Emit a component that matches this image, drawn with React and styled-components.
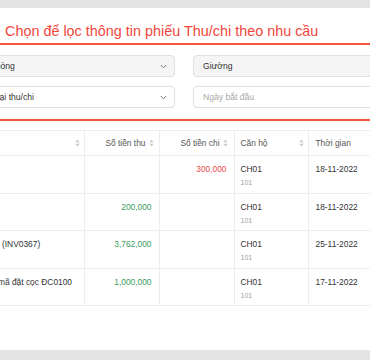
import styled, { createGlobalStyle } from "styled-components";

const GlobalStyle = createGlobalStyle`
  html, body {
    margin: 0;
    padding: 0;
    width: 370px;
    height: 360px;
    overflow: hidden;
    background: #e4e4e4;
    font-family: "Liberation Sans", Arial, sans-serif;
  }
`;

const Page = styled.div`
  padding-top: 8px;
  height: 360px;
  box-sizing: border-box;
`;

const Card = styled.div`
  background: #ffffff;
  height: 342px;
  overflow: hidden;
`;

const Title = styled.h2`
  margin: 0;
  padding: 13px 5px 2px;
  font-size: 14.4px;
  line-height: 20px;
  font-weight: 400;
  color: #f1463b;
  white-space: nowrap;
  border-bottom: 2px solid #f3553f;
`;

const Filters = styled.div`
  display: grid;
  grid-template-columns: 195px 325px;
  column-gap: 18px;
  row-gap: 9px;
  margin-left: -20px;
  margin-right: -200px;
  padding: 10px 0 11px;
  border-bottom: 2px solid #f3553f;
`;

const Field = styled.div`
  display: flex;
  align-items: center;
  justify-content: space-between;
  height: 22px;
  box-sizing: border-box;
  padding: 0 7px 0 9px;
  border: 1px solid #e0e0e0;
  border-radius: 4px;
  background: ${(p) => (p.$filled ? "#f5f5f5" : "#ffffff")};
  font-size: 8.6px;
  color: ${(p) => (p.$placeholder ? "#a8a8a8" : "#333333")};
  white-space: nowrap;
`;

const Chevron = () => (
  <svg width="7" height="5" viewBox="0 0 7 5" fill="none">
    <path d="M0.8 1 L3.5 3.8 L6.2 1" stroke="#777" strokeWidth="1" />
  </svg>
);

const TableWrap = styled.div`
  margin-top: 9px;
  overflow: hidden;
`;

const Table = styled.table`
  border-collapse: collapse;
  table-layout: fixed;
  width: 400px;
  font-size: 8.4px;
  color: #333333;
`;

const Th = styled.th`
  height: 25px;
  padding: 0 ${(p) => p.$pr ?? 6}px 0 ${(p) => p.$pl ?? 6}px;
  font-weight: 400;
  color: #555555;
  border: 1px solid #ececf3;
  border-left: ${(p) => (p.$first ? "none" : "1px solid #ececf3")};
  box-sizing: border-box;
`;

const HeadInner = styled.div`
  display: flex;
  align-items: center;
  justify-content: ${(p) => (p.$right ? "flex-end" : "space-between")};
  gap: 3px;
  white-space: nowrap;
`;

const Td = styled.td`
  height: 37.5px;
  box-sizing: border-box;
  vertical-align: top;
  padding: 6px ${(p) => p.$pr ?? 6}px 0 ${(p) => p.$pl ?? 6}px;
  text-align: ${(p) => (p.$right ? "right" : "left")};
  border: 1px solid #ececf3;
  border-left: ${(p) => (p.$first ? "none" : "1px solid #ececf3")};
  border-top: none;
  line-height: 14px;
  white-space: nowrap;
  overflow: hidden;
`;

const Amount = styled.span`
  color: ${(p) => (p.$out ? "#ec4747" : "#3a9a5b")};
`;

const Clip = styled.span`
  display: inline-block;
  margin-left: ${(p) => p.$shift || 0}px;
`;

const Sub = styled.div`
  font-size: 7px;
  line-height: 13px;
  color: #a0a0a0;
`;

const SortIcon = () => (
  <svg width="5" height="8" viewBox="0 0 5 8">
    <path d="M2.5 0.5 L4.6 3.2 H0.4 Z" fill="#c8c8c8" />
    <path d="M2.5 7.5 L4.6 4.8 H0.4 Z" fill="#c8c8c8" />
  </svg>
);

const rows = [
  { desc: "", shift: 0, inAmt: "", outAmt: "300,000", date: "18-11-2022" },
  { desc: "", shift: 0, inAmt: "200,000", outAmt: "", date: "18-11-2022" },
  { desc: "(INV0367)", shift: -4, inAmt: "3,762,000", outAmt: "", date: "25-11-2022" },
  { desc: "mã đặt cọc ĐC0100", shift: -8, inAmt: "1,000,000", outAmt: "", date: "17-11-2022" },
];

export default function App() {
  return (
    <Page>
      <GlobalStyle />
      <Card>
        <Title>Chọn để lọc thông tin phiếu Thu/chi theo nhu cầu</Title>
        <Filters>
          <Field $filled>
            <span>Phòng</span>
            <Chevron />
          </Field>
          <Field $filled>Giường</Field>
          <Field>
            <span>Loại thu/chi</span>
            <Chevron />
          </Field>
          <Field $placeholder>Ngày bắt đầu</Field>
        </Filters>
        <TableWrap>
          <Table>
            <colgroup>
              <col style={{ width: 84 }} />
              <col style={{ width: 75 }} />
              <col style={{ width: 75 }} />
              <col style={{ width: 74 }} />
              <col style={{ width: 92 }} />
            </colgroup>
            <thead>
              <tr>
                <Th $first $pr={4}>
                  <HeadInner $right>
                    <SortIcon />
                  </HeadInner>
                </Th>
                <Th $pr={5}>
                  <HeadInner $right>
                    <span>Số tiền thu</span>
                    <SortIcon />
                  </HeadInner>
                </Th>
                <Th $pr={6}>
                  <HeadInner $right>
                    <span>Số tiền chi</span>
                    <SortIcon />
                  </HeadInner>
                </Th>
                <Th $pl={6} $pr={4}>
                  <HeadInner>
                    <span>Căn hộ</span>
                    <SortIcon />
                  </HeadInner>
                </Th>
                <Th $pl={7}>
                  <HeadInner>
                    <span>Thời gian</span>
                  </HeadInner>
                </Th>
              </tr>
            </thead>
            <tbody>
              {rows.map((r, i) => (
                <tr key={i}>
                  <Td $first $pl={6}>
                    <Clip $shift={r.shift}>{r.desc}</Clip>
                  </Td>
                  <Td $right $pr={7}>
                    <Amount>{r.inAmt}</Amount>
                  </Td>
                  <Td $right $pr={7}>
                    <Amount $out>{r.outAmt}</Amount>
                  </Td>
                  <Td $pl={6}>
                    CH01
                    <Sub>101</Sub>
                  </Td>
                  <Td $pl={7}>{r.date}</Td>
                </tr>
              ))}
            </tbody>
          </Table>
        </TableWrap>
      </Card>
    </Page>
  );
}
